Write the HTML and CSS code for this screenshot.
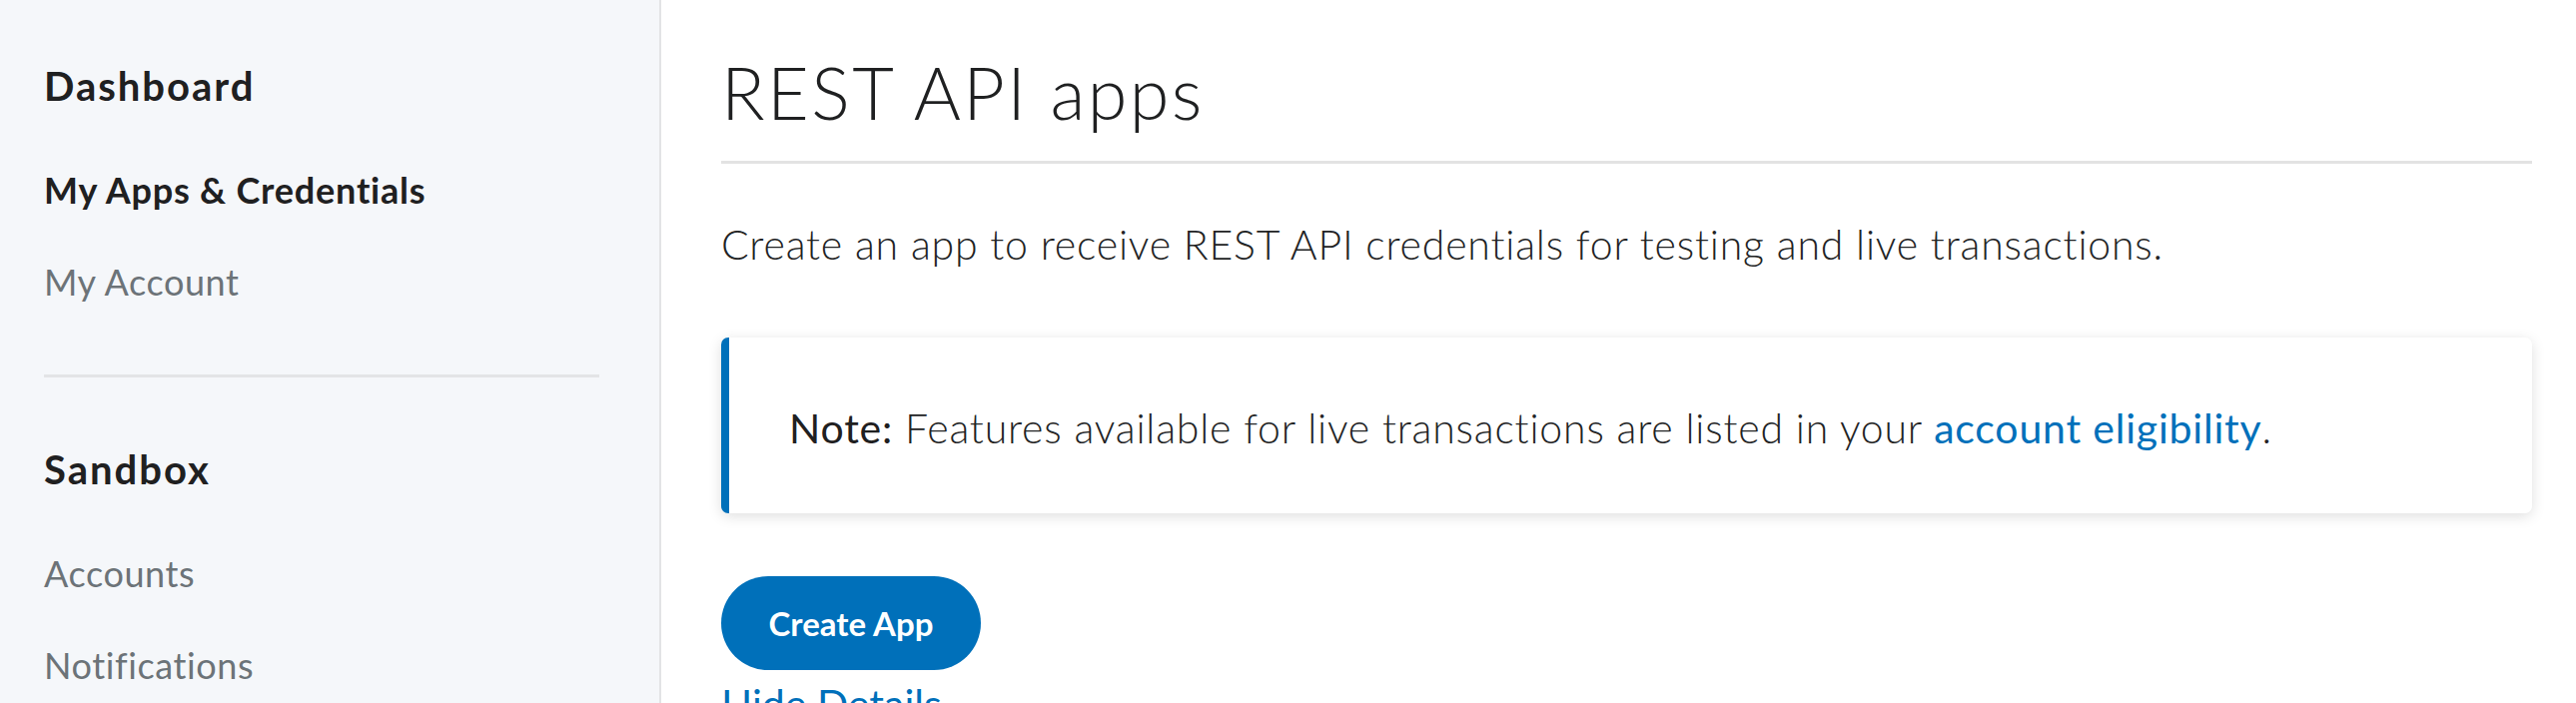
FILE: index.html
```html
<!DOCTYPE html>
<html lang="en">
<head>
<meta charset="utf-8">
<title>REST API apps</title>
<link rel="stylesheet" href="styles.css">
</head>
<body>
<div class="page">
  <aside class="sidebar">
    <h2 class="side-heading">Dashboard</h2>
    <a class="side-link active" href="#">My Apps &amp; Credentials</a>
    <a class="side-link" href="#">My Account</a>
    <hr class="side-divider">
    <h2 class="side-heading sandbox">Sandbox</h2>
    <a class="side-link" href="#">Accounts</a>
    <a class="side-link" href="#">Notifications</a>
  </aside>
  <main class="main">
    <h1 class="title">REST API apps</h1>
    <hr class="title-rule">
    <p class="intro">Create an app to receive REST API credentials for testing and live transactions.</p>
    <div class="note">
      <p class="note-text"><strong>Note:</strong> Features available for live transactions are listed in your <a class="note-link" href="#">account eligibility</a>.</p>
    </div>
    <button class="btn-create" type="button">Create App</button>
    <a class="details-link" href="#">Hide Details</a>
  </main>
</div>
</body>
</html>
```
FILE: styles.css
```css
* { box-sizing: border-box; }
html, body {
  margin: 0;
  padding: 0;
  height: 100%;
  overflow: hidden;
  background: #ffffff;
}
body {
  font-family: "Lato", "Open Sans", sans-serif;
  color: #222324;
}
.page {
  display: flex;
  height: 704px;
}
.sidebar {
  width: 662px;
  flex: 0 0 662px;
  background: #f5f7fa;
  border-right: 2px solid #e2e3e5;
  padding: 62px 60px 0 44px;
  display: flex;
  flex-direction: column;
}
.sidebar > * { flex-shrink: 0; }
.side-heading {
  margin: 0;
  font-size: 40px;
  line-height: 48px;
  font-weight: 700;
  color: #1f2021;
  letter-spacing: 2px;
}
.side-link {
  display: block;
  font-size: 36px;
  line-height: 92px;
  color: #6c7378;
  text-decoration: none;
  letter-spacing: 0.6px;
}
.side-link.active {
  font-weight: 700;
  color: #1f2021;
  margin-top: 34px;
  letter-spacing: 0.8px;
}
.side-divider {
  border: 0;
  height: 3px;
  background: #e3e4e6;
  margin: 47px 0 0 0;
  width: 100%;
}
.side-heading.sandbox {
  margin-top: 68px;
  margin-bottom: 34px;
}
.main {
  flex: 1;
  padding: 49px 44px 0 60px;
  display: flex;
  flex-direction: column;
  align-items: flex-start;
}
.main > * { flex-shrink: 0; }
.title {
  margin: 0;
  font-size: 72px;
  line-height: 86px;
  font-weight: 300;
  color: #1f2021;
  letter-spacing: 2.4px;
}
.title-rule {
  border: 0;
  height: 3px;
  background: #e3e3e3;
  margin: 26px 0 0 0;
  width: 100%;
}
.intro {
  margin: 57px 0 0 0;
  font-size: 41px;
  line-height: 48px;
  font-weight: 300;
  color: #222324;
  letter-spacing: 0.8px;
}
.note {
  margin-top: 69px;
  width: 100%;
  height: 176px;
  background: #ffffff;
  border-left: 8px solid #0070ba;
  border-radius: 7px;
  box-shadow: 0 3px 14px rgba(0, 0, 0, 0.13);
  display: flex;
  align-items: center;
  padding: 6px 60px 0 60px;
}
.note-text {
  margin: 0;
  font-size: 41px;
  line-height: 48px;
  font-weight: 300;
  color: #222324;
  letter-spacing: 0.8px;
}
.note-text strong {
  font-weight: 400;
  color: #1f2021;
}
.note-link {
  color: #0070ba;
  font-weight: 400;
  text-decoration: none;
}
.btn-create {
  margin-top: 63px;
  width: 260px;
  height: 94px;
  border: 0;
  border-radius: 47px;
  background: #0070ba;
  color: #ffffff;
  font-family: "Lato", "Open Sans", sans-serif;
  font-size: 33px;
  font-weight: 700;
  padding: 0;
}
.details-link {
  margin-top: 10px;
  font-size: 41px;
  line-height: 48px;
  color: #0070ba;
  text-decoration: none;
  font-weight: 400;
}
```
